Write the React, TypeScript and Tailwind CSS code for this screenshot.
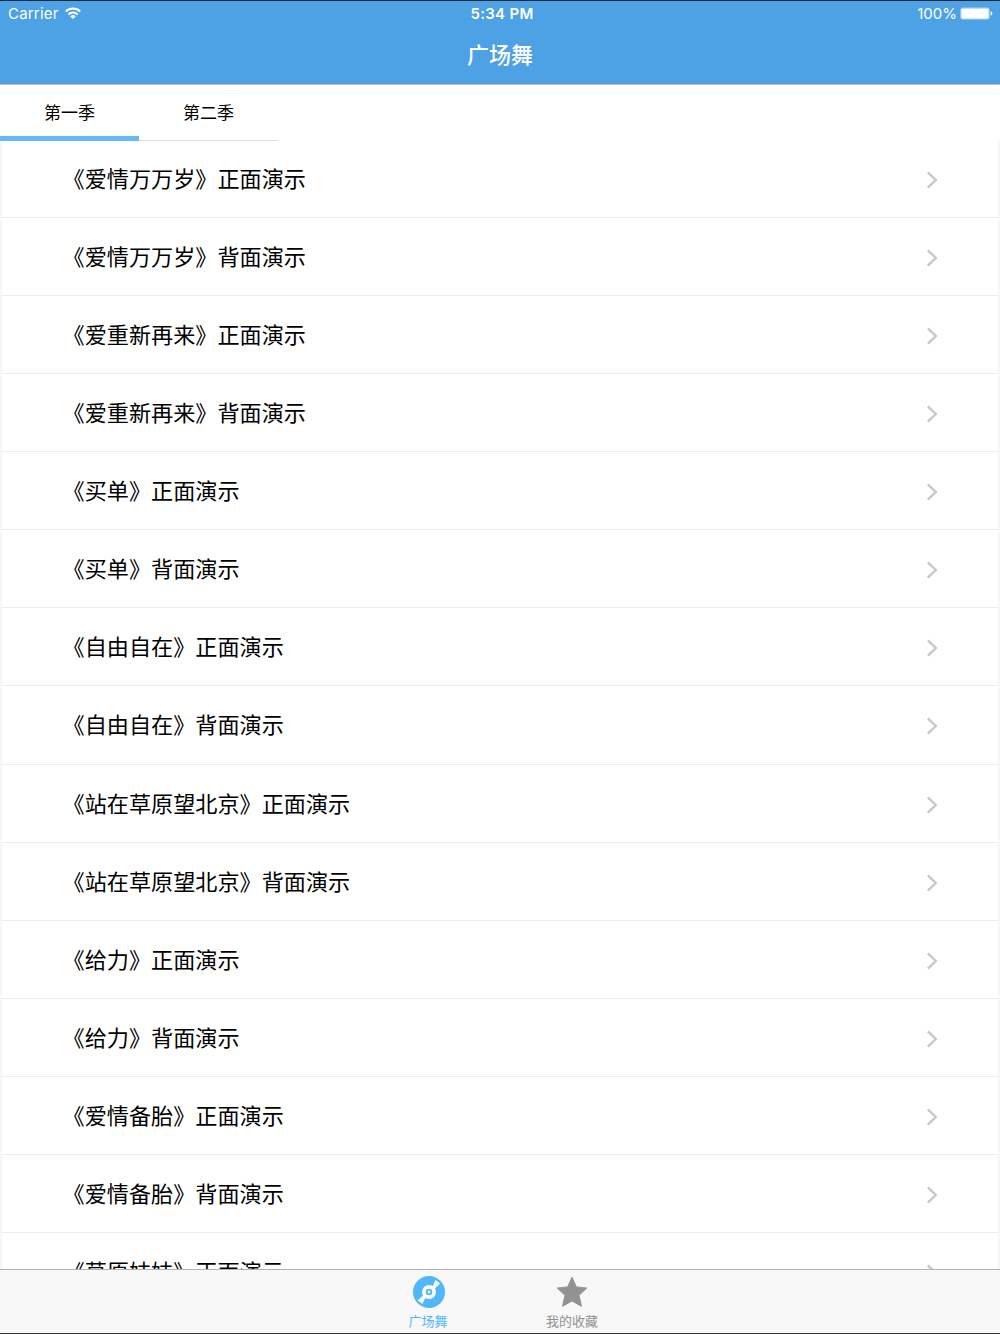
const TABS = ['第一季', '第二季']

const SONGS = ['爱情万万岁', '爱重新再来', '买单', '自由自在', '站在草原望北京', '给力', '爱情备胎', '草原妹妹']

const ROWS = SONGS.flatMap(song => [`《${song}》正面演示`, `《${song}》背面演示`]).slice(0, 15)

function WifiIcon() {
  return (
    <svg width="16" height="12" viewBox="0 0 16 12" fill="none" stroke="white" strokeWidth="2.1">
      <path d="M0.8 4.5a10.2 10.2 0 0 1 14.4 0" />
      <path d="M3.4 7.4a6.5 6.5 0 0 1 9.2 0" />
      <path d="M5.3 9.4a3.8 3.8 0 0 1 5.4 0L8 12z" fill="white" stroke="none" />
    </svg>
  )
}

function BatteryIcon() {
  return (
    <svg width="33" height="13" viewBox="0 0 33 13" className="mt-px">
      <rect x="0.3" y="0.6" width="29.4" height="12" rx="2.4" fill="#a8d2f3" />
      <rect x="1.5" y="1.8" width="27" height="9.6" rx="1" fill="white" />
      <path d="M30.6 4.3c1.1.4 1.8 1.2 1.8 2.2s-.7 1.8-1.8 2.2z" fill="white" />
    </svg>
  )
}

function DiscIcon() {
  return (
    <svg width="32" height="32" viewBox="0 0 32 32" className="ml-px">
      <circle cx="16" cy="16" r="16" fill="#51b7fb" />
      <path d="M19.6 10.6L22.6 3.9l4.6 3.5-5.4 5z" fill="white" />
      <path d="M12.4 21.4L9.4 28.1l-4.6-3.5 5.4-5z" fill="white" />
      <circle cx="16" cy="16" r="7" fill="white" />
      <circle cx="16" cy="16" r="3.3" fill="#51b7fb" />
      <circle cx="16" cy="16" r="1.4" fill="white" />
    </svg>
  )
}

function StarIcon() {
  return (
    <svg width="32" height="32" viewBox="0 0 32 32" fill="#929292" stroke="#929292" strokeWidth="1" strokeLinejoin="round">
      <path d="M16 1.3l4.3 9.6 10.4 1.2-7.7 7.2 2.5 11L16 25l-9.5 5.3 2.5-11-7.7-7.2 10.4-1.2z" />
    </svg>
  )
}

export default function App() {
  return (
    <div className="flex h-[1334px] w-[1000px] flex-col overflow-hidden border-y border-t-[#14283a] border-b-[#333335] bg-white font-['Inter','Noto_Sans_CJK_SC',sans-serif] text-black">
      <header className="h-[84px] shrink-0 border-b border-[#b9b9b9] bg-[#4da1e5] text-white">
        <div className="grid h-6 grid-cols-3 items-center pr-[7px] pl-2 text-[15px] leading-none">
          <div className="flex items-center gap-1.5">
            <span className="tracking-[0.2px]">Carrier</span>
            <WifiIcon />
          </div>
          <span className="pl-[3px] text-center font-semibold tracking-[0.3px]">5:34 PM</span>
          <div className="flex items-center justify-end gap-[3px]">
            <span>100%</span>
            <BatteryIcon />
          </div>
        </div>
        <h1 className="text-center font-['Noto_Sans_CJK_SC',sans-serif] text-[22px] leading-[56px] font-medium">广场舞</h1>
      </header>

      <nav className="flex h-14 shrink-0 font-['Noto_Sans_CJK_SC',sans-serif] text-[17px]">
        {TABS.map((tab, i) => (
          <button
            key={tab}
            className={`flex h-14 w-[139px] flex-col items-center ${
              i === 0 ? 'border-b-[5px] border-[#65b8fa]' : 'border-b border-[#dedede]'
            }`}
          >
            <span className="leading-[53px]">{tab}</span>
          </button>
        ))}
      </nav>

      <main className="min-h-0 flex-1 overflow-hidden border-x-2 border-[#f6f6f6]">
        <ul className="-mt-[1.1px] font-['Noto_Sans_CJK_SC',sans-serif] text-[22.13px]">
          {ROWS.map(title => (
            <li
              key={title}
              className="flex h-[78.08px] items-center justify-between border-b border-[#ececec] pr-[60px] pl-[60.6px]"
            >
              <span className="pb-[3px] leading-none">{title}</span>
              <svg width="12" height="18" viewBox="0 0 12 18" className="mt-[3px]" fill="none" stroke="#c7c7cc" strokeWidth="2.4">
                <path d="M1.8 1.3L9.8 9l-8 7.7" />
              </svg>
            </li>
          ))}
        </ul>
      </main>

      <footer className="flex h-16 shrink-0 justify-center gap-[86px] border-t border-[#b2b2b2] bg-[#f8f8f8] pt-[6px] font-['Noto_Sans_CJK_SC',sans-serif] text-[13px]">
        <div className="flex w-[58px] flex-col items-center text-[#51b7fb]">
          <DiscIcon />
          <span className="mt-1 leading-[18px]">广场舞</span>
        </div>
        <div className="flex w-[58px] flex-col items-center text-[#929292]">
          <StarIcon />
          <span className="mt-1 leading-[18px]">我的收藏</span>
        </div>
      </footer>
    </div>
  )
}
